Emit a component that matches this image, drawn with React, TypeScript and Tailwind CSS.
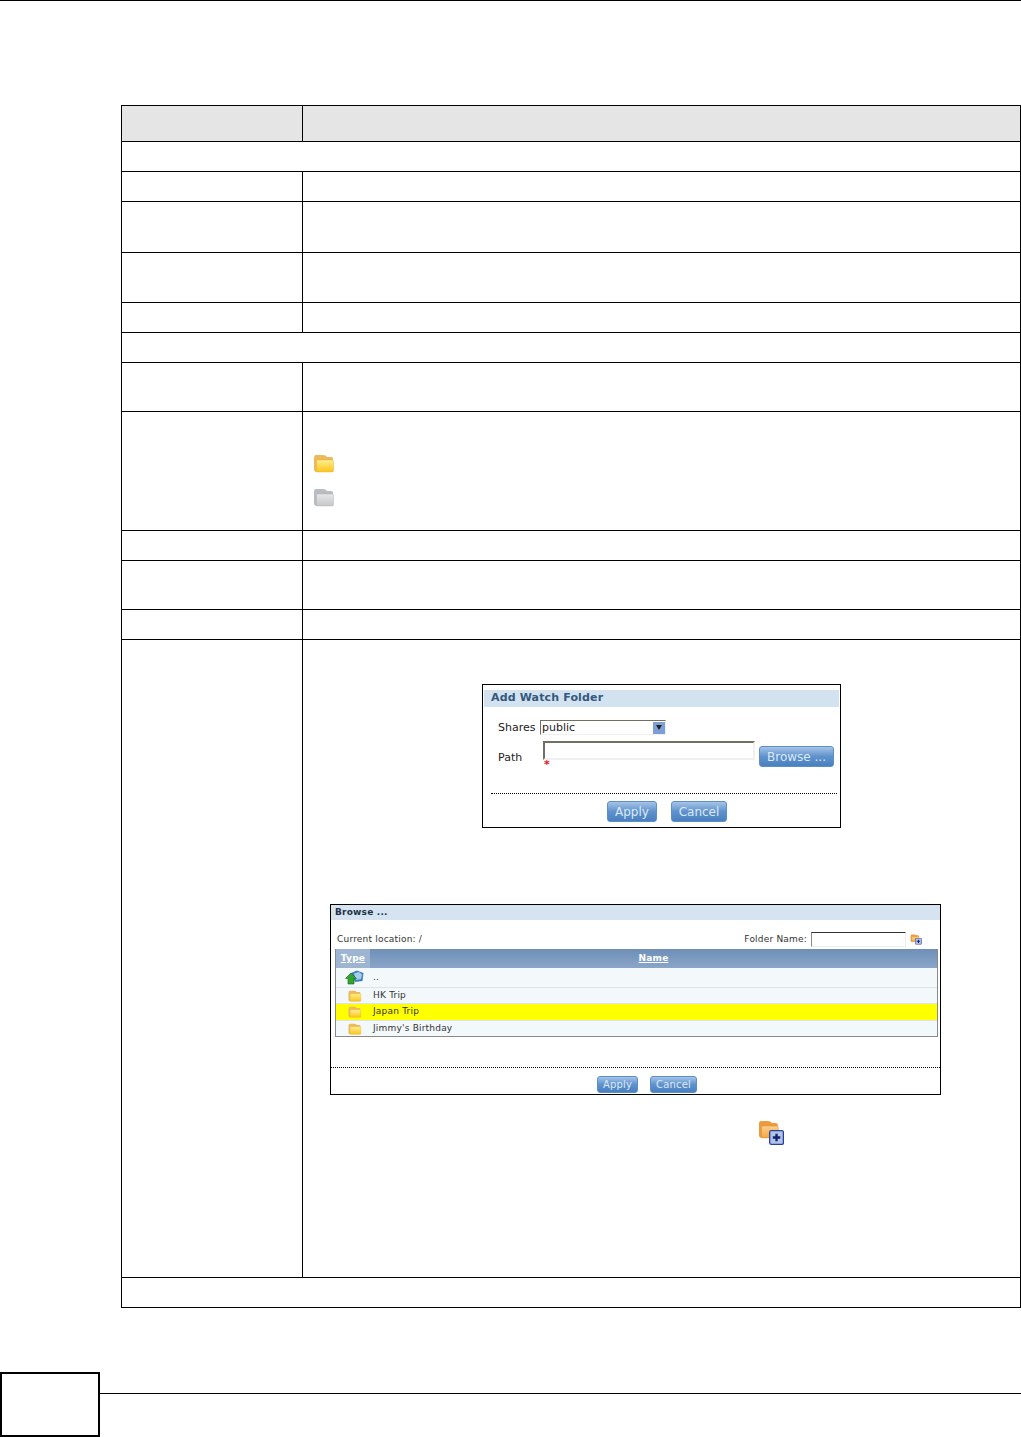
import React from 'react';

const FolderIcon = ({ tone = 'yellow', className = '' }: { tone?: 'yellow' | 'gray' | 'orange'; className?: string }) => {
  const colors = {
    yellow: { back: '#edb95a', top: '#fdf08e', bottom: '#fcc419', edge: '#e2a63c' },
    gray: { back: '#b9bcc0', top: '#e6e7e8', bottom: '#c6c7c9', edge: '#a9abae' },
    orange: { back: '#ee9b3f', top: '#fbd089', bottom: '#f5a545', edge: '#d9822b' },
  }[tone];
  const id = `folder-${tone}`;
  return (
    <svg viewBox="0 0 21 19" className={className}>
      <defs>
        <linearGradient id={id} x1="0" y1="0" x2="0" y2="1">
          <stop offset="0" stopColor={colors.top} />
          <stop offset="1" stopColor={colors.bottom} />
        </linearGradient>
      </defs>
      <path d="M1 4 Q1 1 3 1 L10 1 Q13 1 14 3 L18 3 Q20 3 20 5 L20 17 Q20 18 19 18 L4 18 Q1 18 1 15 Z" fill={colors.back} />
      <path d="M4 6 L19 6 Q20.5 6 20.5 7.5 L20.5 16.5 Q20.5 18 19 18 L5 18 Q3.5 18 3.5 16.5 L3.5 7 Q3.5 6 4 6 Z" fill={`url(#${id})`} stroke={colors.edge} strokeWidth="0.4" />
    </svg>
  );
};

const UpFolderIcon = () => (
  <svg viewBox="0 0 19 15" className="h-[15px] w-[19px]">
    <path d="M6 3 L12 0.5 L18.5 3 L17.5 11 L10 12 Z" fill="#3f82bb" />
    <path d="M9 3.5 L14 2 L17 4.5 L16 9 L11 10 Z" fill="#a8cde8" />
    <path d="M6 3 L11.5 8.5 L9 8.5 L9 14 L3 14 L3 8.5 L0.5 8.5 Z" fill="#2fa52f" stroke="#14641a" strokeWidth="0.6" />
  </svg>
);

const AddFolderIcon = ({ className = '' }: { className?: string }) => (
  <div className={`relative ${className}`}>
    <FolderIcon tone="orange" className="absolute left-0 top-0 h-[76%] w-[80%]" />
    <svg viewBox="0 0 14 14" className="absolute bottom-0 right-0 h-[60%] w-[58%]">
      <rect x="0.5" y="0.5" width="13" height="13" rx="1.5" fill="#8ea6dc" stroke="#2a3f8f" />
      <rect x="2" y="2" width="10" height="10" fill="#b4c6ec" />
      <path d="M7 3.5 V10.5 M3.5 7 H10.5" stroke="#14246e" strokeWidth="2.2" />
    </svg>
  </div>
);

const BlueButton = ({ label, className = '' }: { label: string; className?: string }) => (
  <div className={`flex items-center justify-center rounded-[3px] border border-[#5b8fc9] bg-gradient-to-b from-[#a6c4e6] via-[#5f92cd] to-[#4a80bf] text-[#dce9f6] ${className}`}>
    {label}
  </div>
);

const AddWatchFolder = () => (
  <div className="ml-[179px] mt-[44px] flex h-[144px] w-[359px] flex-col border border-black bg-white font-['DejaVu_Sans',sans-serif] text-[11px] text-[#222]">
    <div className="mx-px mt-[5px] flex h-[17px] items-center bg-[#d2e3ef] pl-[7px] font-bold tracking-[0.15px] text-[#34587f]">Add Watch Folder</div>

    <div className="ml-[15px] mt-[13px] flex h-[15px] items-center">
      <span className="mt-[2px] w-[42px]">Shares</span>
      <div className="flex h-[15px] w-[126px] items-center justify-between border border-[#f0f0f0] border-l-[#716f64] border-t-[#716f64] pl-px pr-0">
        <span className="mt-[2px]">public</span>
        <div className="flex h-[12px] w-[12px] items-center justify-center bg-[#7d9fd6]">
          <div className="h-0 w-0 border-x-[3px] border-t-[5px] border-x-transparent border-t-[#222]" />
        </div>
      </div>
    </div>

    <div className="ml-[15px] mt-[6px] flex h-[26px] items-start">
      <span className="mt-[9px] w-[45px]">Path</span>
      <div className="flex flex-col">
        <div className="h-[19px] w-[212px] border-2 border-[#f0f0f0] border-l-[#716f64] border-t-[#716f64]" />
        <span className="ml-px h-[7px] text-[11px] font-bold leading-[9px] text-[#e8101a]">*</span>
      </div>
      <BlueButton label="Browse ..." className="ml-[4px] mt-[5px] h-[21px] w-[75px] text-[12px]" />
    </div>

    <div className="ml-[8px] mt-[26px] w-[346px] border-t border-dotted border-black" />

    <div className="ml-[124px] mt-[7px] flex gap-[14px] text-[12px]">
      <BlueButton label="Apply" className="h-[21px] w-[50px]" />
      <BlueButton label="Cancel" className="h-[21px] w-[56px]" />
    </div>
  </div>
);

const browseRows = [
  { name: '..', up: true, h: 'h-[20px]', bg: 'bg-[#f3f8fb]' },
  { name: 'HK Trip', h: 'h-[16px]', bg: 'bg-[#f3f8fb]' },
  { name: 'Japan Trip', h: 'h-[17px]', bg: 'bg-[#ffff00]' },
  { name: "Jimmy's Birthday", h: 'h-[15px]', bg: 'bg-[#f3f8fb]' },
];

const BrowseDialog = () => (
  <div className="ml-[27px] mt-[76px] flex h-[191px] w-[611px] flex-col border border-black bg-white font-['DejaVu_Sans',sans-serif] text-[9px] tracking-[0.2px] text-[#333]">
    <div className="flex h-[15px] items-center bg-[#d5e4f0] pl-[4px] font-bold text-[#1f3347]">Browse ...</div>

    <div className="ml-[6px] mr-[18px] mt-[12px] flex h-[14px] items-center justify-between">
      <span className="mt-[2px]">Current location: /</span>
      <div className="flex items-center">
        <span className="mr-[4px] mt-[2px]">Folder Name:</span>
        <div className="h-[15px] w-[95px] border border-[#eeeeee] border-l-[#888888] border-t-[#333333]" />
        <AddFolderIcon className="ml-[4px] h-[11px] w-[12px]" />
      </div>
    </div>

    <div className="ml-[4px] mt-[3px] w-[603px] border-x border-b border-[#8a8a8a]">
      <div className="flex h-[19px] bg-gradient-to-b from-[#6f8fb8] to-[#8aa5c8] font-bold text-white">
        <div className="flex w-[34px] items-center justify-center bg-[#9db5d3] pt-px underline">Type</div>
        <div className="flex flex-1 items-center justify-center pt-px underline">Name</div>
      </div>
      {browseRows.map((row) => (
        <div key={row.name} className={`flex items-center border-b border-[#dde3e6] last:border-b-0 ${row.h} ${row.bg}`}>
          <div className="flex w-[37px] justify-center">
            {row.up ? <UpFolderIcon /> : <FolderIcon className="h-[12px] w-[15px]" />}
          </div>
          <span>{row.name}</span>
        </div>
      ))}
    </div>

    <div className="mt-[30px] border-t border-dotted border-black" />

    <div className="ml-[266px] mt-[8px] flex gap-[12px] text-[10px]">
      <BlueButton label="Apply" className="h-[17px] w-[41px] border-[#2f5f94]" />
      <BlueButton label="Cancel" className="h-[17px] w-[47px] border-[#2f5f94]" />
    </div>
  </div>
);

const Row = ({ h, full, header, children }: { h: string; full?: boolean; header?: boolean; children?: React.ReactNode }) => (
  <div className={`flex border-b border-black ${h} ${header ? 'bg-[#e5e5e5]' : ''}`}>
    {!full && <div className="w-[181px] shrink-0 border-r border-black" />}
    {!full && <div className="flex-1">{children}</div>}
  </div>
);

export default function App() {
  return (
    <div className="flex h-[1437px] flex-col overflow-hidden bg-white">
      <div className="h-px bg-black" />

      <div className="ml-[121px] mt-[104px] w-[900px] border-x border-t border-black">
        <Row h="h-[36px]" header />
        <Row h="h-[30px]" full />
        <Row h="h-[30px]" />
        <Row h="h-[51px]" />
        <Row h="h-[50px]" />
        <Row h="h-[30px]" />
        <Row h="h-[30px]" full />
        <Row h="h-[49px]" />
        <Row h="h-[119px]">
          <div className="ml-[10px] mt-[42px] flex flex-col gap-[15px]">
            <FolderIcon className="h-[19px] w-[21px]" />
            <FolderIcon tone="gray" className="h-[19px] w-[21px]" />
          </div>
        </Row>
        <Row h="h-[30px]" />
        <Row h="h-[49px]" />
        <Row h="h-[30px]" />
        <Row h="h-[638px]">
          <div className="flex flex-col items-start">
            <AddWatchFolder />
            <BrowseDialog />
            <AddFolderIcon className="ml-[455px] mt-[25px] h-[25px] w-[26px]" />
          </div>
        </Row>
        <Row h="h-[30px]" full />
      </div>

      <div className="mt-[64px] flex h-[65px] items-start">
        <div className="h-[65px] w-[100px] border-2 border-black" />
        <div className="h-[22px] flex-1 border-b border-black" />
      </div>
    </div>
  );
}
